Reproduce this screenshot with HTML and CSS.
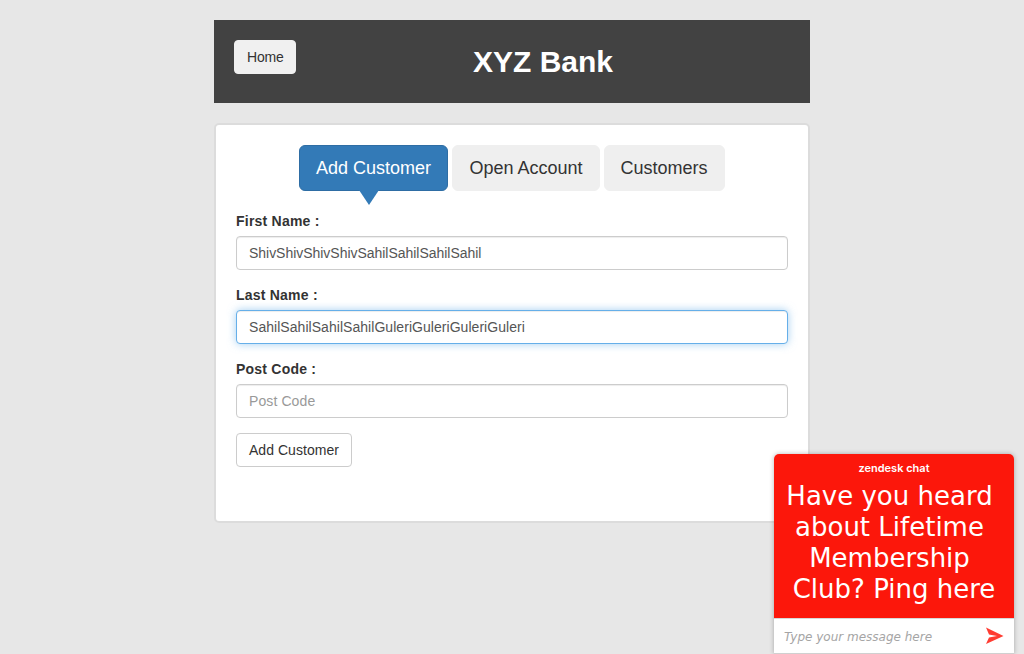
FILE: index.html
```html
<!DOCTYPE html>
<html lang="en">
<head>
<meta charset="utf-8">
<title>XYZ Bank</title>
<link rel="stylesheet" href="styles.css">
</head>
<body>
<main class="page">
  <header class="main-header">
    <button class="btn home">Home</button>
    <strong class="heading">XYZ Bank</strong>
  </header>
  <section class="panel">
    <nav class="tabs">
      <button class="tab active">Add Customer</button>
      <button class="tab">Open Account</button>
      <button class="tab">Customers</button>
    </nav>
    <form class="form">
      <div class="form-group">
        <label for="first">First Name :</label>
        <input id="first" class="form-control first-name" type="text" placeholder="First Name" value="ShivShivShivShivSahilSahilSahilSahil">
      </div>
      <div class="form-group">
        <label for="last">Last Name :</label>
        <input id="last" class="form-control focused" type="text" placeholder="Last Name" value="SahilSahilSahilSahilGuleriGuleriGuleriGuleri">
      </div>
      <div class="form-group">
        <label for="post">Post Code :</label>
        <input id="post" class="form-control post-code" type="text" placeholder="Post Code">
      </div>
      <button class="btn submit" type="button">Add Customer</button>
    </form>
  </section>
</main>
<aside class="chat">
  <div class="chat-banner">
    <div class="chat-brand">zendesk chat</div>
    <div class="chat-title">
      <span class="line">Have you heard</span>
      <span class="line">about Lifetime</span>
      <span class="line">Membership</span>
      <span class="line last">Club? Ping here</span>
    </div>
  </div>
  <div class="chat-entry">
    <span class="chat-hint">Type your message here</span>
    <svg class="send" width="18" height="18" viewBox="0 0 18 18"><path d="M0 .5 17.5 9 0 17l3-6.6L11 9 3 7.6z" fill="#ff3c32"/></svg>
  </div>
</aside>
</body>
</html>
```
FILE: styles.css
```css
* { box-sizing: border-box; }
body {
  margin: 0;
  height: 654px;
  overflow: hidden;
  background: #e7e7e7;
  font: 14px/20px "Liberation Sans", Arial, sans-serif;
  color: #333;
}
.page { width: 596px; margin: 0 auto; padding-top: 20px; }
button, input { font: inherit; color: inherit; }
.main-header {
  display: flex;
  align-items: flex-start;
  height: 83px;
  padding: 20px;
  background: #424242;
}
.btn {
  height: 34px;
  padding: 6px 12px;
  border: 1px solid #ccc;
  border-radius: 4px;
  background: #fff;
}
.home { width: 62px; padding: 6px 13px 6px 12px; letter-spacing: -.2px; background: #f0f0f0; border-color: #f0f0f0; }
.submit { width: 116px; padding: 6px 0; letter-spacing: .06px; }
.heading {
  flex: 1;
  text-align: center;
  font-size: 30px;
  line-height: 43px;
  color: #fff;
}
.panel {
  height: 400px;
  margin-top: 20px;
  padding: 20px;
  border: 2px solid #dcdcdc;
  border-radius: 5px;
  background: #fff;
}
.tabs { display: flex; justify-content: center; gap: 4px; }
.tab {
  position: relative;
  height: 46px;
  padding: 10px 16px;
  border: 1px solid #efefef;
  border-radius: 6px;
  background: #efefef;
  font-size: 18px;
  line-height: 24px;
}
.tab.active { padding: 10px 16.5px 10px 15.5px; background: #337ab7; border-color: #2e6da4; color: #fff; }
.tab.active::after {
  content: "";
  position: absolute;
  top: 44px;
  left: 59px;
  border: solid transparent;
  border-width: 15px 10px 0;
  border-top-color: #337ab7;
}
.form { padding-top: 20px; }
.form-group { margin-bottom: 15px; }
.form-group label { display: block; margin-bottom: 5px; font-weight: bold; letter-spacing: .22px; }
.form-control {
  display: block;
  width: 100%;
  height: 34px;
  padding: 6px 12px;
  border: 1px solid #ccc;
  border-radius: 4px;
  background: #fff;
  color: #555;
  box-shadow: inset 0 1px 1px rgba(0,0,0,.075);
}
.form-control::placeholder { color: #999; }
.first-name { letter-spacing: -.03px; }
.post-code { letter-spacing: .1px; }
.form-control.focused {
  letter-spacing: .045px;
  border-color: #66afe9;
  box-shadow: inset 0 1px 1px rgba(0,0,0,.075), 0 0 8px rgba(102,175,233,.6);
}
.chat {
  position: absolute;
  top: 454px;
  left: 774px;
  width: 240px;
  height: 200px;
  border-radius: 5px 5px 0 0;
  box-shadow: 0 0 5px rgba(0,0,0,.28);
  font-family: Verdana, "DejaVu Sans", sans-serif;
}
.chat-banner {
  height: 164px;
  padding-top: 7px;
  border-radius: 5px 5px 0 0;
  background: #fc170b;
  color: #fff;
  text-align: center;
}
.chat-brand {
  font: 600 11px/14px Inter, Lato, sans-serif;
  letter-spacing: 0;
}
.chat-title { padding-top: 6px; font-size: 26px; line-height: 31px; }
.line { display: block; padding-right: 9px; white-space: nowrap; }
.line.last { padding-right: 0; }
.chat-entry {
  display: flex;
  align-items: center;
  justify-content: space-between;
  height: 36px;
  padding: 0 10px;
  border-top: 1px solid #d8d8d8;
  border-bottom: 1px solid #d0d0d0;
  background: #fff;
}
.chat-hint { padding-top: 1px; font-size: 12px; font-style: italic; color: #a5a5a5; }
.send { display: block; }
```
